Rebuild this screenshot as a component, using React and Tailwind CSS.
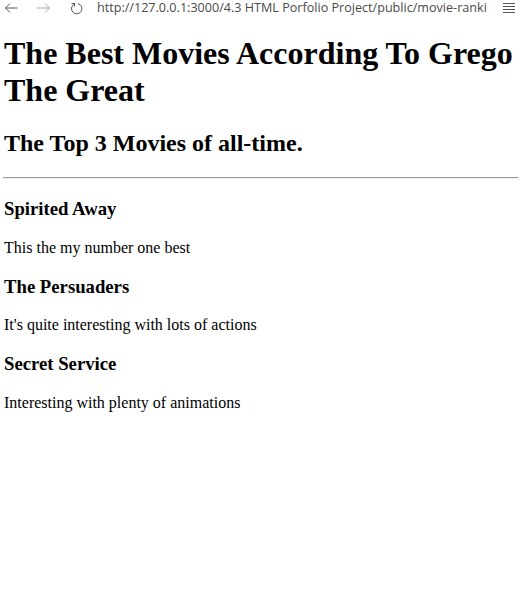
// Movie ranking page shown inside a bare browser toolbar

const movies = [
  { title: 'Spirited Away', note: 'This the my number one best' },
  { title: 'The Persuaders', note: "It's quite interesting with lots of actions" },
  { title: 'Secret Service', note: 'Interesting with plenty of animations' },
];

function Toolbar() {
  return (
    <div className="flex items-center h-4 bg-white text-[#4a4a4a] font-['Open_Sans','Liberation_Sans',sans-serif]">
      {/* back */}
      <svg className="ml-[5px] w-[13px] h-[10px]" viewBox="0 0 13 10" fill="none" stroke="#555" strokeWidth="1">
        <path d="M0.5 5H12.5M5 0.5L0.5 5L5 9.5" />
      </svg>
      {/* forward */}
      <svg className="ml-[19px] w-[13px] h-[10px]" viewBox="0 0 13 10" fill="none" stroke="#aaa" strokeWidth="1">
        <path d="M0 5H12M8 0.5L12.5 5L8 9.5" />
      </svg>
      {/* reload */}
      <svg className="ml-[20px] w-[13px] h-[13px]" viewBox="0 0 13 13" fill="none" stroke="#555" strokeWidth="1">
        <path d="M4 2.2A5.2 5.2 0 1 0 8 1.6" />
        <path d="M1.5 1.5H4.5V4.5" />
      </svg>
      <span className="ml-[14px] text-[12.6px] leading-4 whitespace-nowrap overflow-hidden w-[394px]">
        http://127.0.0.1:3000/4.3 HTML Porfolio Project/public/movie-ranki
      </span>
      <svg className="ml-[12px] w-[12px] h-[11px]" viewBox="0 0 12 11" fill="none" stroke="#555" strokeWidth="1">
        <path d="M0 0.5H12M0 3.5H12M0 6.5H12M0 9.5H12" />
      </svg>
    </div>
  );
}

export default function App() {
  return (
    <div className="w-[526px] h-[616px] bg-white text-black overflow-hidden">
      <Toolbar />
      <main className="pl-1 pr-2 font-['Liberation_Serif','Times_New_Roman',serif]">
        <h1 className="text-[32px] font-bold leading-[normal] mt-[19px] mb-[21.44px]">
          The Best Movies According To Grego The Great
        </h1>
        <h2 className="text-[24px] font-bold leading-[normal] mt-[21.44px] mb-[19.92px]">
          The Top 3 Movies of all-time.
        </h2>
        <hr className="border-t border-b border-t-[#9a9a9a] border-b-[#eeeeee] my-2 -ml-px" />
        {movies.map((m) => (
          <section key={m.title}>
            <h3 className="text-[18.72px] font-bold leading-[normal] mt-[18.72px] mb-[18.72px]">{m.title}</h3>
            <p className="text-[16px] leading-[normal] my-4">{m.note}</p>
          </section>
        ))}
      </main>
    </div>
  );
}
